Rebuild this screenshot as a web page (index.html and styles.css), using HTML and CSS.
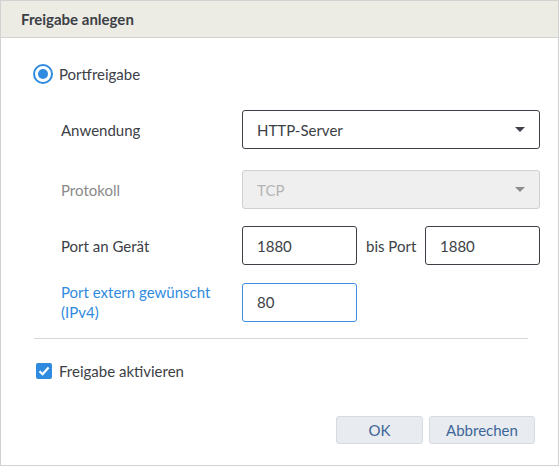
FILE: index.html
```html
<!DOCTYPE html>
<html>
  <head>
    <meta charset="utf-8">
    <title>Freigabe anlegen</title>
    <link rel="stylesheet" href="styles.css">
  </head>
  <body>
    <div class="dialog">
      <div class="dialog-head">Freigabe anlegen</div>
      <div class="dialog-body">
        <label class="radio-row">
          <span class="radio"><span class="radio-dot"></span></span>
          Portfreigabe
        </label>

        <div class="form">
          <div class="row row-first">
            <div class="label">Anwendung</div>
            <div class="select">HTTP-Server<span class="arrow"></span></div>
          </div>
          <div class="row row-second">
            <div class="label disabled">Protokoll</div>
            <div class="select select-disabled">TCP<span class="arrow"></span></div>
          </div>
          <div class="row">
            <div class="label">Port an Gerät</div>
            <div class="field">1880</div>
            <div class="between">bis Port</div>
            <div class="field">1880</div>
          </div>
          <div class="row">
            <div class="label active">Port extern gewünscht<br>(IPv4)</div>
            <div class="field field-focus">80</div>
          </div>
        </div>

        <div class="sep"></div>

        <label class="check-row">
          <span class="check">
            <svg width="12" height="10" viewBox="0 0 12 10"><path d="M1.5 5.2 L4.6 8.2 L10.6 1.6" fill="none" stroke="#fff" stroke-width="2.2"/></svg>
          </span>
          Freigabe aktivieren
        </label>

        <div class="buttons">
          <button class="btn btn-ok">OK</button>
          <button class="btn">Abbrechen</button>
        </div>
      </div>
    </div>
  </body>
</html>
```

FILE: styles.css
```css
html, body {
  margin: 0;
  padding: 0;
  background: #fff;
  font-family: Lato, "Liberation Sans", sans-serif;
  font-size: 15px;
  color: #3c4046;
}
.dialog {
  box-sizing: border-box;
  width: 559px;
  height: 466px;
  border: 1px solid #d2d2d2;
  background: #fff;
}
.dialog-head {
  height: 36px;
  line-height: 36px;
  padding-left: 20px;
  background: #ecebe4;
  border-bottom: 1px solid #d2d2d2;
  font-weight: bold;
  font-size: 15px;
  color: #3c4046;
}
.dialog-body {
  padding: 26px 0 0 32px;
}
.radio-row, .check-row {
  display: flex;
  align-items: center;
  gap: 6px;
  height: 20px;
}
.radio {
  box-sizing: border-box;
  width: 20px;
  height: 20px;
  border: 2px solid #2f8be0;
  border-radius: 50%;
  display: flex;
  align-items: center;
  justify-content: center;
}
.radio-dot {
  width: 10px;
  height: 10px;
  border-radius: 50%;
  background: #2f8be0;
}
.form {
  padding-left: 28px;
}
.row {
  display: flex;
  align-items: center;
  margin-top: 17px;
}
.row-first {
  margin-top: 26px;
}
.row-second {
  margin-top: 21px;
}
.label {
  width: 181px;
  line-height: 20px;
}
.label.disabled {
  color: #8a8a8a;
}
.label.active {
  color: #2f8be0;
}
.select, .field {
  box-sizing: border-box;
  height: 39px;
  border: 1px solid #3c4046;
  border-radius: 3px;
  padding-left: 14px;
  display: flex;
  align-items: center;
}
.select {
  width: 298px;
  position: relative;
}
.arrow {
  position: absolute;
  right: 14px;
  top: 16px;
  border-left: 5px solid transparent;
  border-right: 5px solid transparent;
  border-top: 5px solid #3c4046;
}
.select-disabled {
  background: #efefef;
  border-color: #d0d0d0;
  color: #b4b4b4;
}
.select-disabled .arrow {
  border-top-color: #8e8e8e;
}
.field {
  width: 115px;
}
.field-focus {
  border-color: #3b8ee0;
}
.between {
  width: 68px;
  padding-left: 9px;
  box-sizing: border-box;
}
.sep {
  height: 1px;
  background: #d6d6d6;
  margin: 16px 0 0 1px;
  width: 494px;
}
.check-row {
  margin-top: 22px;
  padding-left: 3px;
  gap: 7px;
}
.check {
  width: 16px;
  height: 16px;
  border-radius: 2px;
  background: #2f8be0;
  display: flex;
  align-items: center;
  justify-content: center;
}
.buttons {
  display: flex;
  justify-content: flex-end;
  gap: 6px;
  width: 502px;
  margin-top: 35px;
}
.btn {
  height: 28px;
  border: 1px solid #d6dbe2;
  border-radius: 3px;
  background: #e8ebef;
  color: #3d6699;
  font-family: inherit;
  font-size: 15px;
  padding: 0;
}
.btn-ok {
  width: 87px;
}
.btn:last-child {
  width: 106px;
}
```
